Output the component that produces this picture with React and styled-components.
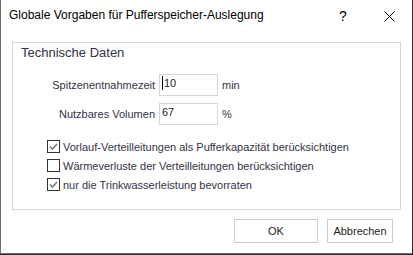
import styled, { createGlobalStyle } from "styled-components";

const GlobalStyle = createGlobalStyle`
  html, body {
    margin: 0;
    padding: 0;
    background: #2b2b2b;
  }
  body {
    font-family: "Liberation Sans", Arial, sans-serif;
    font-size: 11px;
    color: #1e1e1e;
  }
`;

const Window = styled.div`
  width: 411px;
  height: 253px;
  background: #ffffff;
  border-left: 1px solid #6e6e6e;
  border-bottom: 1px solid #6e6e6e;
  display: flex;
  flex-direction: column;
  box-sizing: content-box;
`;

const TitleBar = styled.div`
  height: 32px;
  display: flex;
  align-items: center;
  padding-left: 8px;
`;

const Title = styled.div`
  flex: 1;
  font-size: 12px;
  color: #000;
  padding-bottom: 2px;
`;

const TitleButton = styled.div`
  width: 46px;
  height: 30px;
  display: flex;
  align-items: center;
  justify-content: center;
  color: #000;
  font-size: 14px;
`;

const Group = styled.div`
  margin: 10px 0 0 11px;
  width: 387px;
  border: 1px solid #d6d6d6;
  padding: 2px 0 15px 0;
`;

const Legend = styled.div`
  height: 16px;
  line-height: 16px;
  padding-left: 8px;
  font-size: 13px;
  color: #333344;
`;

const Fields = styled.div`
  margin-top: 13px;
  display: grid;
  grid-template-columns: 142px 59px auto;
  column-gap: 4px;
  row-gap: 7px;
  align-items: center;
`;

const Label = styled.div`
  text-align: right;
  color: #333344;
`;

const Input = styled.div`
  height: 22px;
  box-sizing: border-box;
  border: 1px solid #d6d6d6;
  padding: 0 0 4px 2px;
  color: #1e1e1e;
  display: flex;
  align-items: center;
`;

const Caret = styled.span`
  display: inline-block;
  width: 1px;
  height: 14px;
  background: #000;
  margin-right: 1px;
`;

const Unit = styled.div`
  color: #333344;
`;

const Checks = styled.div`
  margin-top: 12px;
  padding-left: 34px;
  display: flex;
  flex-direction: column;
`;

const CheckRow = styled.label`
  height: 19px;
  display: flex;
  align-items: center;
  gap: 3px;
  color: #333344;
`;

const Box = styled.span`
  width: 13px;
  height: 13px;
  box-sizing: border-box;
  border: 1px solid #333333;
  background: #fff;
  display: flex;
  align-items: center;
  justify-content: center;
`;

const Footer = styled.div`
  margin-top: 9px;
  display: flex;
  justify-content: flex-end;
  gap: 9px;
  padding-right: 19px;
`;

const Button = styled.div`
  width: ${(p) => p.$w}px;
  height: 24px;
  box-sizing: border-box;
  border: 1px solid #cccccc;
  background: #fff;
  display: flex;
  align-items: center;
  justify-content: center;
  color: #1e1e1e;
`;

function Check({ checked, children }) {
  return (
    <CheckRow>
      <Box>
        {checked && (
          <svg width="9" height="7" viewBox="0 0 9 7">
            <path d="M1 3.5 L3.5 6 L8 1" fill="none" stroke="#7a7a7a" strokeWidth="1.6" />
          </svg>
        )}
      </Box>
      {children}
    </CheckRow>
  );
}

export default function App() {
  return (
    <>
      <GlobalStyle />
      <Window>
        <TitleBar>
          <Title>Globale Vorgaben für Pufferspeicher-Auslegung</Title>
          <TitleButton>?</TitleButton>
          <TitleButton>
            <svg width="11" height="11" viewBox="0 0 11 11">
              <path d="M0.5 0.5 L10.5 10.5 M10.5 0.5 L0.5 10.5" stroke="#000" strokeWidth="1" />
            </svg>
          </TitleButton>
        </TitleBar>
        <Group>
          <Legend>Technische Daten</Legend>
          <Fields>
            <Label>Spitzenentnahmezeit</Label>
            <Input>
              <Caret />
              10
            </Input>
            <Unit>min</Unit>
            <Label>Nutzbares Volumen</Label>
            <Input>67</Input>
            <Unit>%</Unit>
          </Fields>
          <Checks>
            <Check checked>Vorlauf-Verteilleitungen als Pufferkapazität berücksichtigen</Check>
            <Check>Wärmeverluste der Verteilleitungen berücksichtigen</Check>
            <Check checked>nur die Trinkwasserleistung bevorraten</Check>
          </Checks>
        </Group>
        <Footer>
          <Button $w={84}>OK</Button>
          <Button $w={66}>Abbrechen</Button>
        </Footer>
      </Window>
    </>
  );
}
